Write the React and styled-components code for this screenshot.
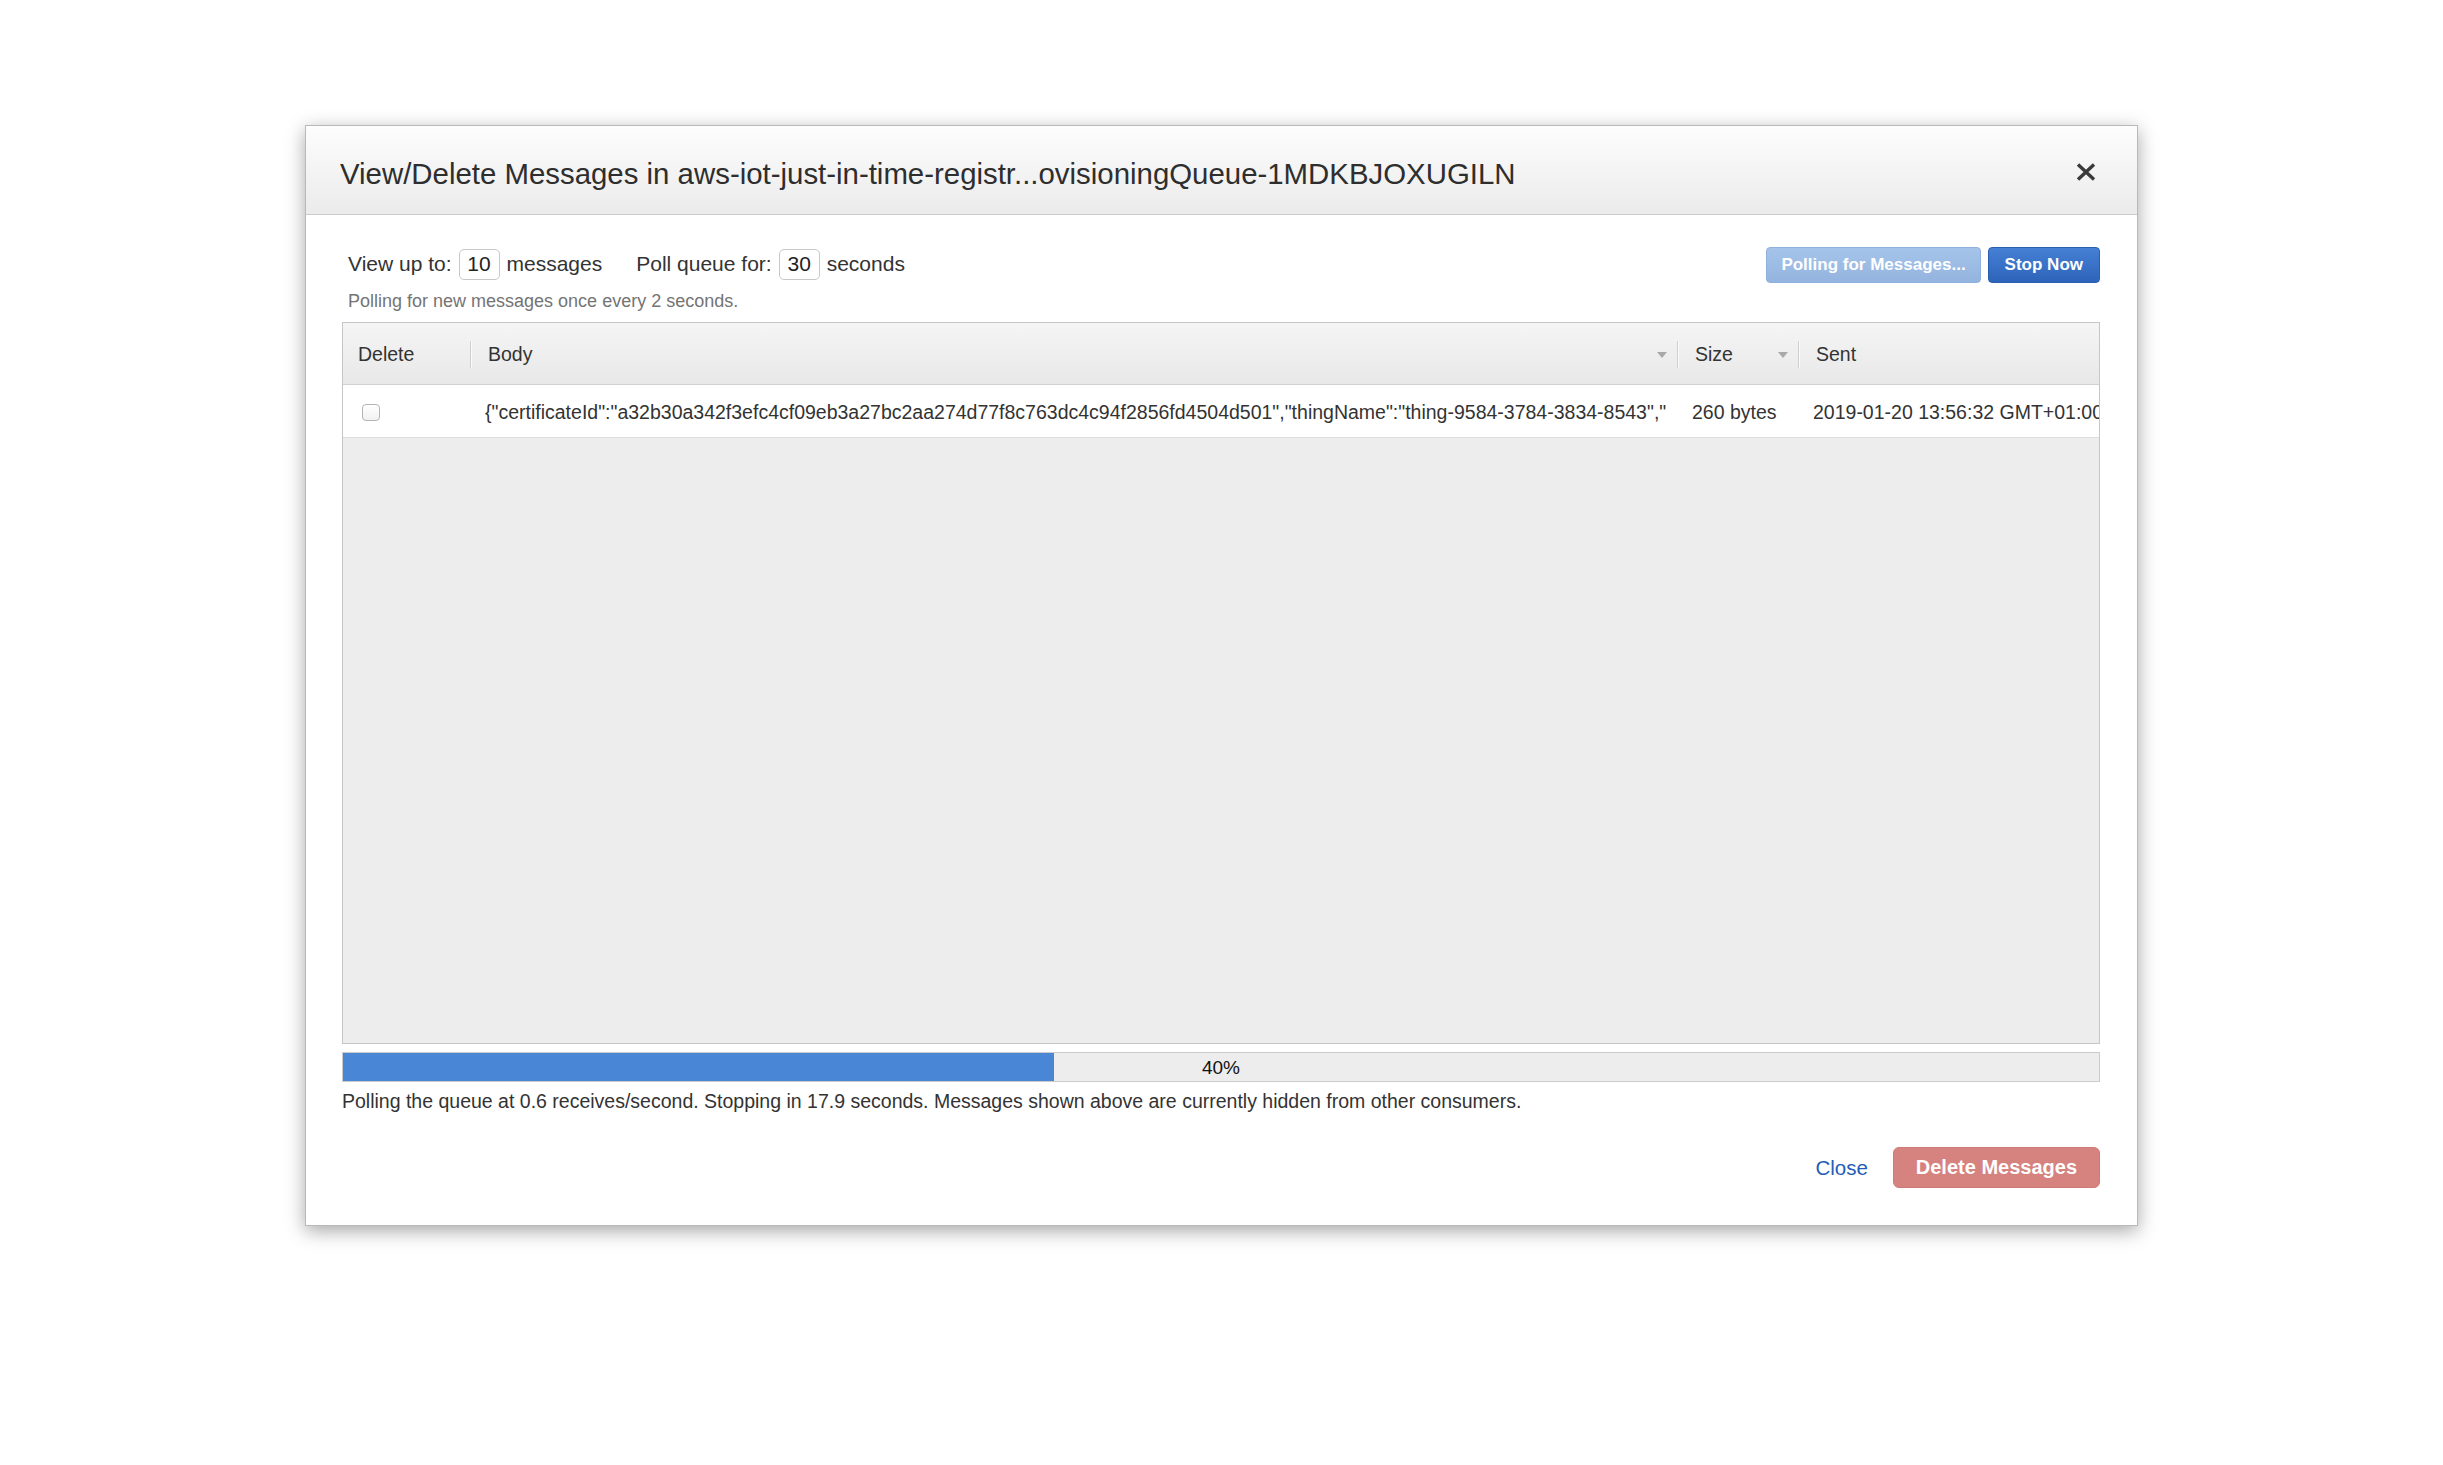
import React from 'react'
import styled, { createGlobalStyle } from 'styled-components'

const Global = createGlobalStyle`
  html, body { margin: 0; padding: 0; background: #fff; }
  body { font-family: 'Liberation Sans', Arial, Helvetica, sans-serif; color: #333; }
`

const BODY_TEXT = '{"certificateId":"a32b30a342f3efc4cf09eb3a27bc2aa274d77f8c763dc4c94f2856fd4504d501","thingName":"thing-9584-3784-3834-8543","'

const progress = 40.5

export default function App() {
  return (
    <Page>
      <Global />
      <Dialog>
        <Header>
          <Title>View/Delete Messages in aws-iot-just-in-time-registr...ovisioningQueue-1MDKBJOXUGILN</Title>
          <CloseX aria-label="close">
            <svg width="20" height="18" viewBox="0 0 20 18">
              <path d="M2 1.5 L18 16.5 M18 1.5 L2 16.5" stroke="#3a3a3a" strokeWidth="3.4" strokeLinecap="butt" />
            </svg>
          </CloseX>
        </Header>

        <Body>
          <Controls>
            <Settings>
              <span>View up to:</span>
              <NumBox>10</NumBox>
              <span>messages</span>
              <Spacer />
              <span>Poll queue for:</span>
              <NumBox>30</NumBox>
              <span>seconds</span>
            </Settings>
            <ButtonGroup>
              <BlueButton $disabled>Polling for Messages...</BlueButton>
              <BlueButton>Stop Now</BlueButton>
            </ButtonGroup>
          </Controls>
          <Hint>Polling for new messages once every 2 seconds.</Hint>

          <Table>
            <HeadRow>
              <HeadCell $first>Delete</HeadCell>
              <HeadCell>
                <Divider />
                <span>Body</span>
                <SortArrow />
              </HeadCell>
              <HeadCell>
                <Divider />
                <span>Size</span>
                <SortArrow />
              </HeadCell>
              <HeadCell>
                <Divider />
                <span>Sent</span>
              </HeadCell>
            </HeadRow>
            <DataRow>
              <CheckCell><Checkbox /></CheckCell>
              <Cell $pad="20px">{BODY_TEXT}</Cell>
              <Cell>260 bytes</Cell>
              <Cell $pad="0">2019-01-20 13:56:32 GMT+01:00</Cell>
            </DataRow>
          </Table>

          <Progress>
            <ProgressFill style={{ width: `${progress}%` }} />
            <ProgressLabel>40%</ProgressLabel>
          </Progress>
          <Status>Polling the queue at 0.6 receives/second. Stopping in 17.9 seconds. Messages shown above are currently hidden from other consumers.</Status>

          <Actions>
            <LinkButton>Close</LinkButton>
            <DangerButton>Delete Messages</DangerButton>
          </Actions>
        </Body>
      </Dialog>
    </Page>
  )
}

const Page = styled.div`
  width: 2443px;
  min-height: 1465px;
  padding-top: 125px;
  box-sizing: border-box;
  display: flex;
  justify-content: center;
  align-items: flex-start;
`

const Dialog = styled.div`
  width: 1833px;
  box-sizing: border-box;
  background: #fff;
  border: 1px solid #b9b9b9;
  box-shadow: 0 5px 18px rgba(0, 0, 0, 0.35);
`

const Header = styled.div`
  height: 89px;
  box-sizing: border-box;
  display: flex;
  align-items: center;
  justify-content: space-between;
  padding: 7px 41px 0 34px;
  background: linear-gradient(#fdfdfd, #ebebeb);
  border-bottom: 1px solid #cbcbcb;
`

const Title = styled.h1`
  margin: 0;
  font-size: 29.4px;
  font-weight: normal;
  color: #2e2e2e;
  white-space: nowrap;
`

const CloseX = styled.span`
  display: flex;
  width: 20px;
  height: 18px;
  margin-top: -3px;
`

const Body = styled.div`
  padding: 31px 37px 37px 36px;
`

const Controls = styled.div`
  display: flex;
  align-items: center;
  justify-content: space-between;
  height: 36px;
`

const Settings = styled.div`
  display: flex;
  align-items: center;
  padding-left: 6px;
  font-size: 21px;
  color: #333;
`

const Spacer = styled.span`
  width: 34px;
`

const NumBox = styled.span`
  width: 41px;
  height: 31px;
  box-sizing: border-box;
  margin: 0 7px;
  display: flex;
  align-items: center;
  justify-content: center;
  border: 1px solid #c9c9c9;
  border-radius: 5px;
  background: #fff;
  color: #222;
`

const ButtonGroup = styled.div`
  display: flex;
  gap: 7px;
  margin-top: 2px;
`

const BlueButton = styled.button`
  height: 36px;
  padding: 0 ${p => (p.$disabled ? '14px' : '16px')};
  font-family: inherit;
  font-size: 17px;
  font-weight: bold;
  color: #fff;
  border-radius: 4px;
  border: 1px solid ${p => (p.$disabled ? '#8fb1de' : '#2a5eae')};
  background: ${p => (p.$disabled
    ? 'linear-gradient(#a6c4ea, #93b4df)'
    : 'linear-gradient(#4580d5, #2d64ba)')};
`

const Hint = styled.div`
  margin: 9px 0 0 6px;
  font-size: 18px;
  line-height: 20px;
  color: #747474;
`

const Table = styled.div`
  margin-top: 11px;
  height: 722px;
  box-sizing: border-box;
  border: 1px solid #c6c6c6;
  background: #ededed;
`

const columns = '127px 1207px 121px 1fr'

const HeadRow = styled.div`
  display: grid;
  grid-template-columns: ${columns};
  height: 62px;
  box-sizing: border-box;
  padding-top: 2px;
  border-bottom: 1px solid #d2d2d2;
  background: linear-gradient(#f5f5f5, #e8e8e8);
  font-size: 19.5px;
  color: #333;
`

const HeadCell = styled.div`
  display: flex;
  align-items: center;
  padding-left: ${p => (p.$first ? '15px' : '0')};
  padding-right: 10px;
  span { flex: 1; }
`

const Divider = styled.i`
  width: 1px;
  height: 27px;
  margin-right: 17px;
  background: #d0d0d0;
  box-shadow: 1px 0 0 #fafafa;
`

const SortArrow = styled.i`
  width: 0;
  height: 0;
  border-left: 5px solid transparent;
  border-right: 5px solid transparent;
  border-top: 6px solid #a9a9a9;
`

const DataRow = styled.div`
  display: grid;
  grid-template-columns: ${columns};
  height: 53px;
  box-sizing: border-box;
  padding-top: 2px;
  background: #fff;
  border-bottom: 1px solid #dedede;
  font-size: 19.5px;
  color: #333;
`

const Cell = styled.div`
  display: flex;
  align-items: center;
  padding: 0 ${p => p.$pad || '12px'} 0 15px;
  white-space: nowrap;
  overflow: hidden;
`

const CheckCell = styled.div`
  display: flex;
  align-items: center;
  padding-left: 19px;
`

const Checkbox = styled.span`
  width: 18px;
  height: 17px;
  box-sizing: border-box;
  border: 1px solid #b4b4b4;
  border-radius: 4px;
  background: linear-gradient(#fff, #f1f1f1);
`

const Progress = styled.div`
  margin-top: 8px;
  height: 30px;
  box-sizing: border-box;
  border: 1px solid #cbcbcb;
  background: #ededed;
  display: grid;
  & > * { grid-area: 1 / 1; }
`

const ProgressFill = styled.div`
  height: 100%;
  background: #4987d6;
`

const ProgressLabel = styled.div`
  align-self: center;
  justify-self: center;
  padding-top: 2px;
  font-size: 19px;
  color: #111;
`

const Status = styled.div`
  margin-top: 8px;
  font-size: 19.5px;
  line-height: 22px;
  color: #333;
`

const Actions = styled.div`
  margin-top: 35px;
  display: flex;
  justify-content: flex-end;
  align-items: center;
  gap: 25px;
`

const LinkButton = styled.button`
  border: 0;
  background: none;
  padding: 0;
  font-family: inherit;
  font-size: 20.5px;
  color: #1f5db6;
`

const DangerButton = styled.button`
  height: 41px;
  padding: 0 22px;
  font-family: inherit;
  font-size: 20px;
  font-weight: bold;
  color: #fff;
  border: 1px solid #d07a77;
  border-radius: 6px;
  background: #d6827f;
`
